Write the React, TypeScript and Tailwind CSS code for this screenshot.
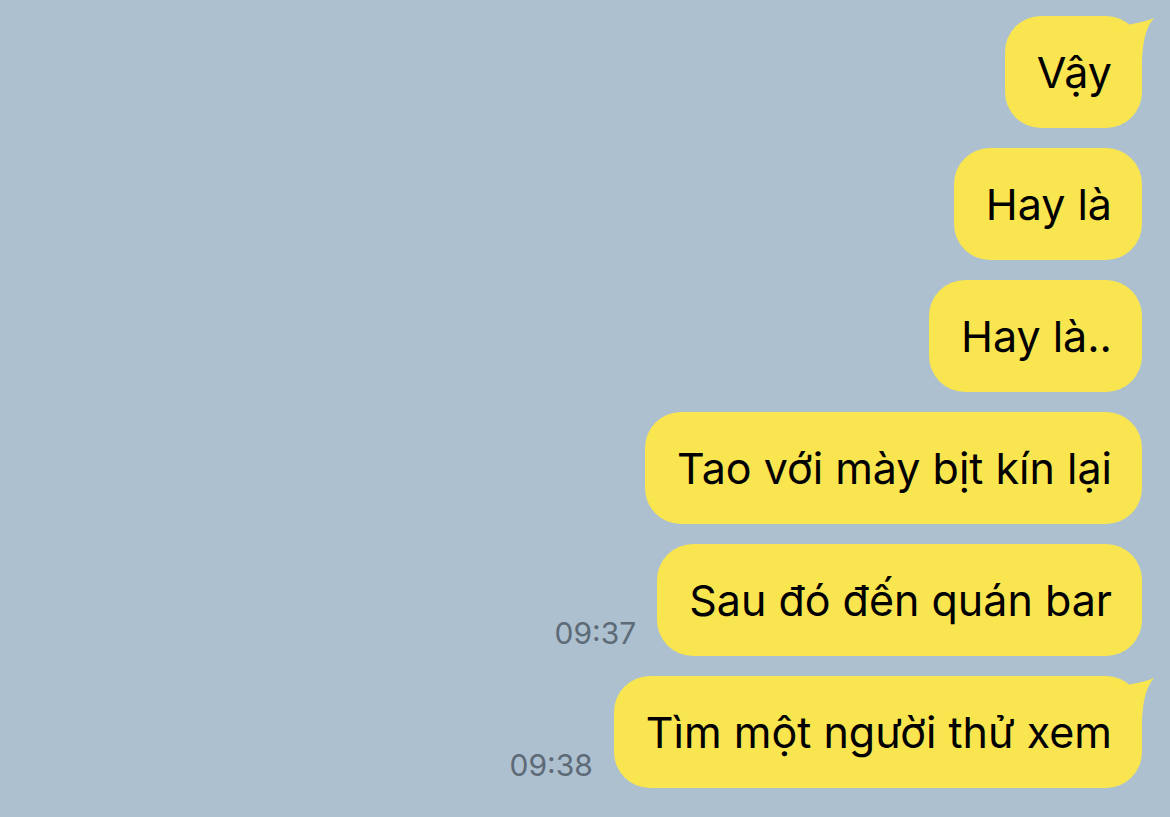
type Msg = {
    id: number,
    text: string,
    time?: string,
    tail?: boolean
}

const messages: Msg[] = [
    { id: 1, text: 'Vậy', tail: true },
    { id: 2, text: 'Hay là' },
    { id: 3, text: 'Hay là..' },
    { id: 4, text: 'Tao với mày bịt kín lại' },
    { id: 5, text: 'Sau đó đến quán bar', time: '09:37' },
    { id: 6, text: 'Tìm một người thử xem', time: '09:38', tail: true },
]

const Tail = () => (
    <svg className="absolute right-[-12px] top-0" width="40" height="44" viewBox="0 0 40 44">
        <path d="M0 12 C12 8 26 8 40 2 C33 10 29 22 28 44 L0 44 Z" fill="#f9e54f" />
    </svg>
)

const Bubble = ({ msg }: { msg: Msg }) => (
    <div className="flex items-end gap-[21px]">
        {msg.time && (
            <span className="mb-[8px] text-[30px] leading-none text-[#5d6a77]">{msg.time}</span>
        )}
        <div className="relative flex h-[112px] items-center rounded-[36px] bg-[#f9e54f] pl-[32px] pr-[30px]">
            {msg.tail && <Tail />}
            <span className="relative text-[43px] leading-none text-black">{msg.text}</span>
        </div>
    </div>
)

export default function App() {
    return (
        <div
            className="flex h-[817px] w-[1170px] flex-col items-end gap-[20px] overflow-hidden bg-[#adc0cf] pr-[28px] pt-[16px]"
            style={{ fontFamily: 'Inter, "Noto Sans", sans-serif' }}
        >
            {messages.map(m => <Bubble key={m.id} msg={m} />)}
        </div>
    )
}
